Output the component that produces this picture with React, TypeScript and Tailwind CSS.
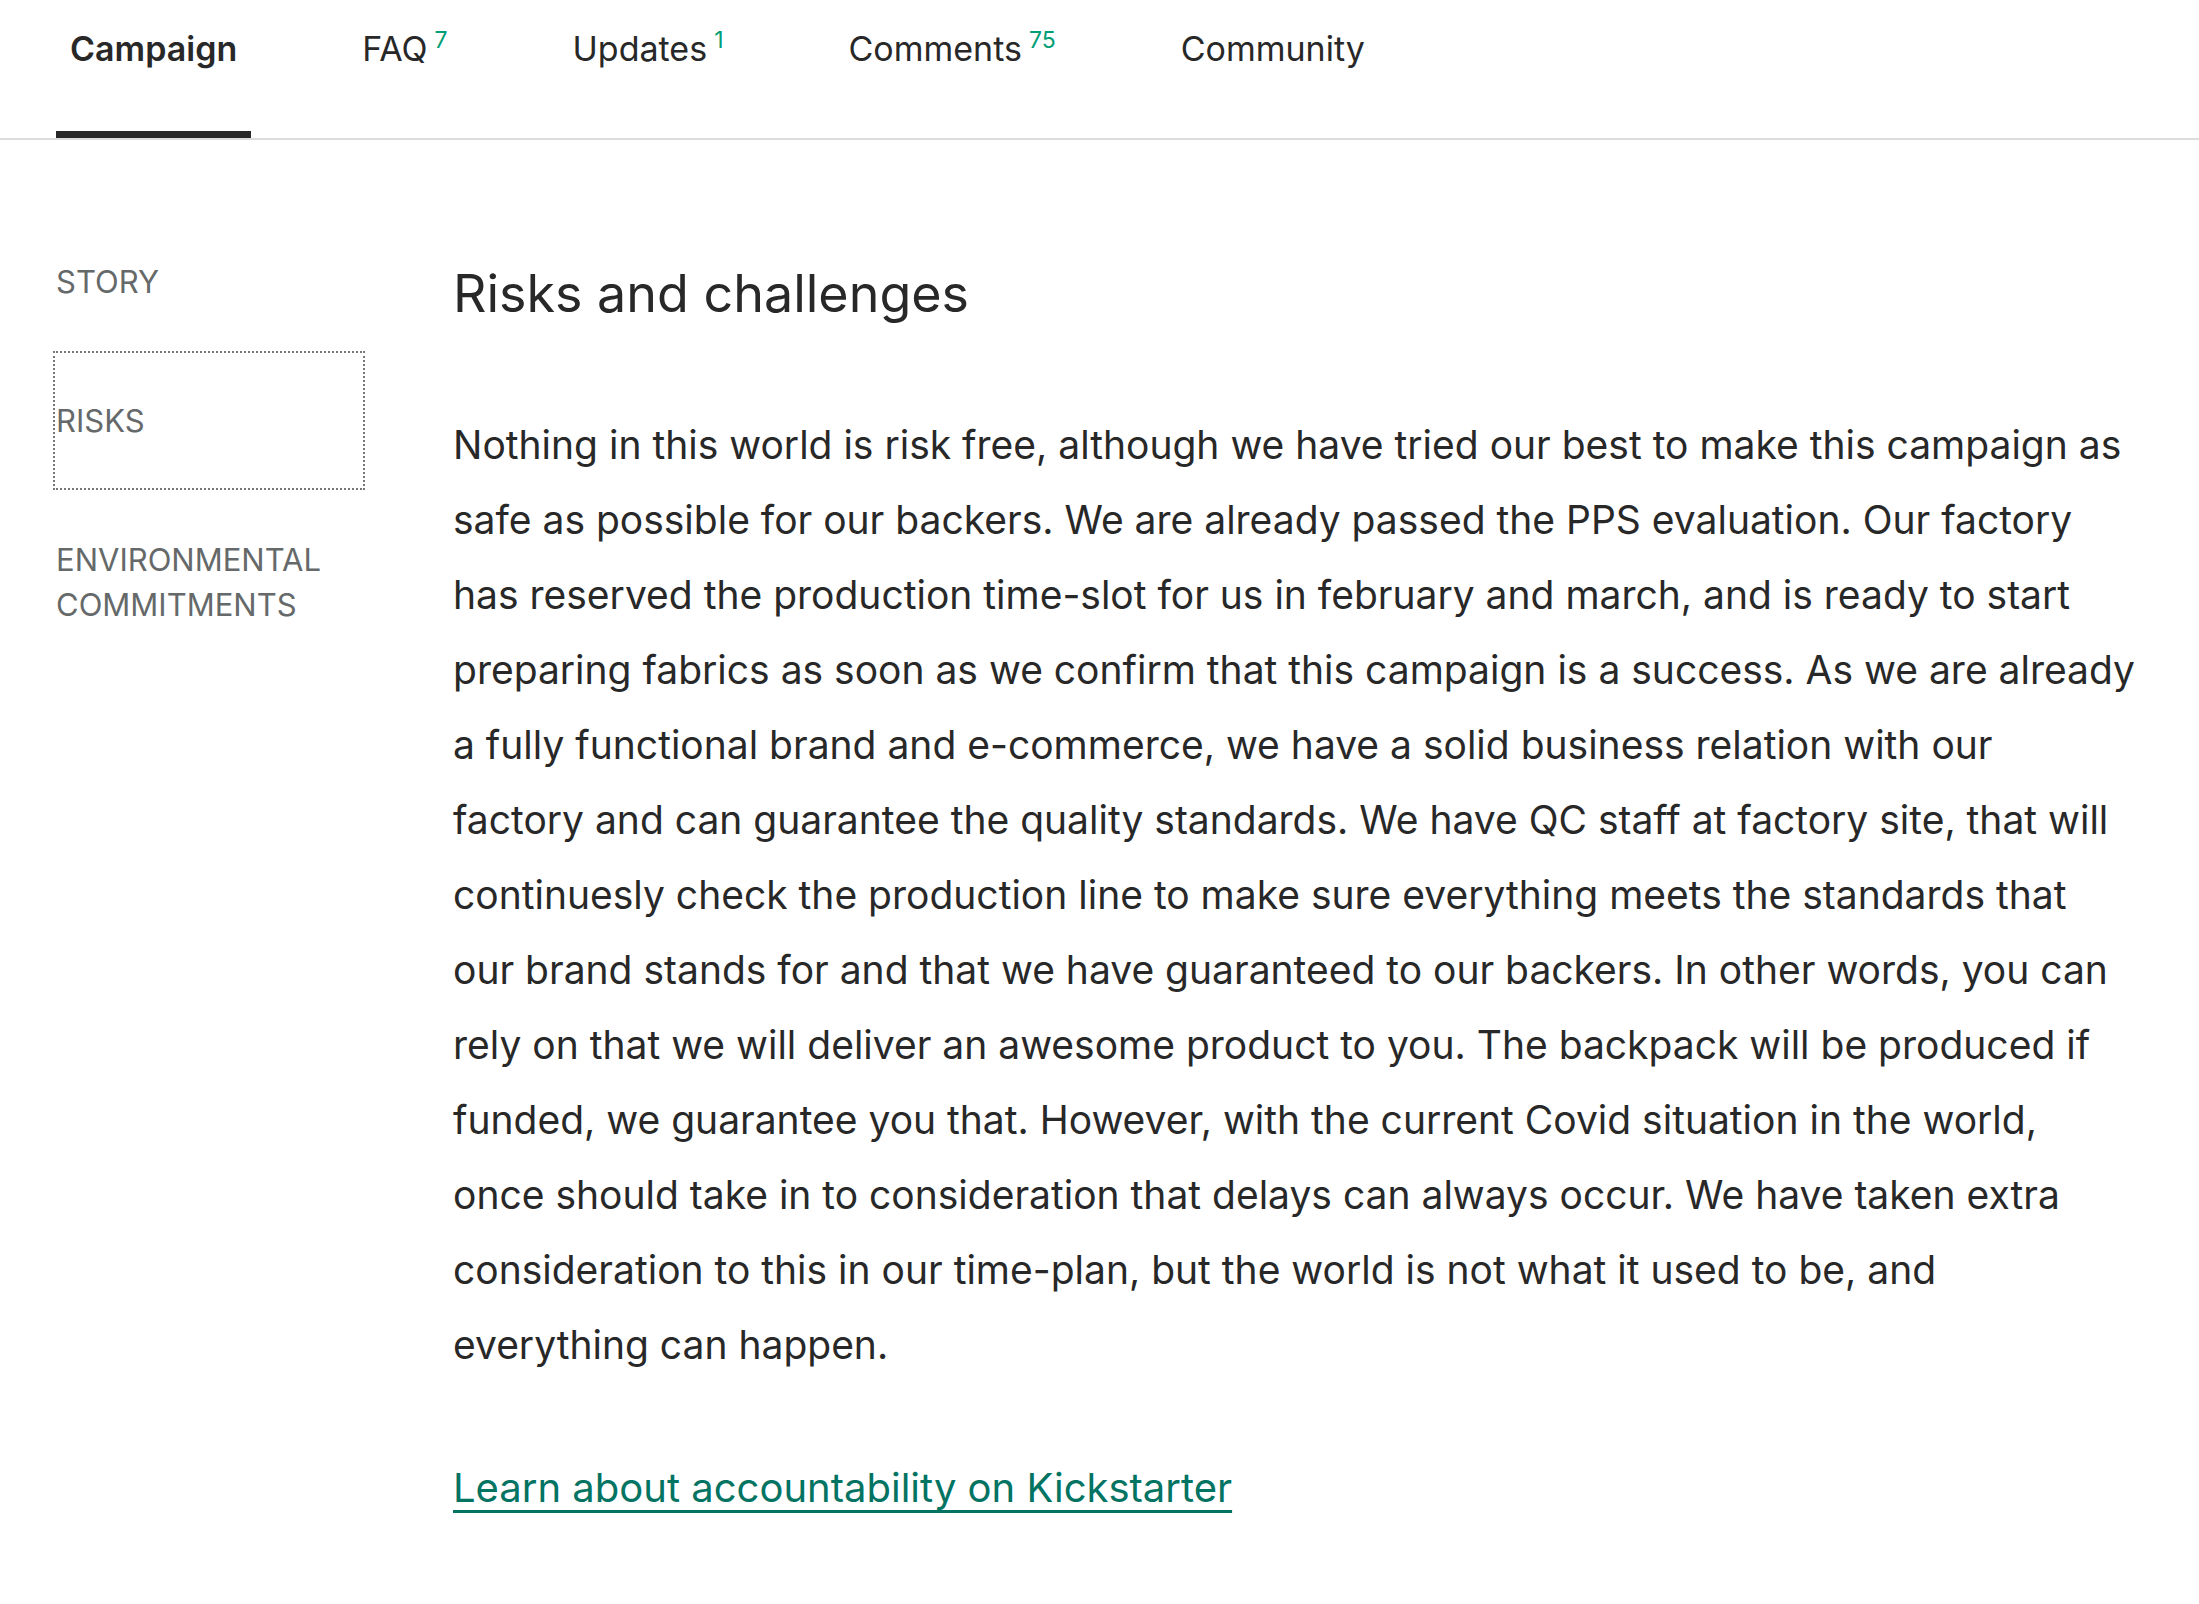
const tabs = [
  { label: "Campaign", count: "", active: true },
  { label: "FAQ", count: "7", active: false },
  { label: "Updates", count: "1", active: false },
  { label: "Comments", count: "75", active: false },
  { label: "Community", count: "", active: false },
];

const sections = [
  { label: ["STORY"], focused: false },
  { label: ["RISKS"], focused: true },
  { label: ["ENVIRONMENTAL", "COMMITMENTS"], focused: false },
];

const lines = [
  "Nothing in this world is risk free, although we have tried our best to make this campaign as",
  "safe as possible for our backers. We are already passed the PPS evaluation. Our factory",
  "has reserved the production time-slot for us in february and march, and is ready to start",
  "preparing fabrics as soon as we confirm that this campaign is a success. As we are already",
  "a fully functional brand and e-commerce, we have a solid business relation with our",
  "factory and can guarantee the quality standards. We have QC staff at factory site, that will",
  "continuesly check the production line to make sure everything meets the standards that",
  "our brand stands for and that we have guaranteed to our backers. In other words, you can",
  "rely on that we will deliver an awesome product to you. The backpack will be produced if",
  "funded, we guarantee you that. However, with the current Covid situation in the world,",
  "once should take in to consideration that delays can always occur. We have taken extra",
  "consideration to this in our time-plan, but the world is not what it used to be, and",
  "everything can happen.",
];

export default function App() {
  return (
    <div className="min-h-screen bg-white text-[#282828] font-['Inter',sans-serif]">
      <nav className="flex h-[140px] border-b-2 border-[#dcdcdc] pl-[56px] gap-[97px]">
        {tabs.map((tab) => (
          <div key={tab.label} className="flex flex-col justify-between">
            <div className="px-[14px] pt-[25px] flex items-start">
              <span
                className={`text-[34px] leading-[48px] ${tab.active ? "font-semibold" : "font-normal"}`}
              >
                {tab.label}
              </span>
              {tab.count && (
                <span className="ml-[7px] text-[23px] leading-[26px] text-[#009e74] mt-[2px]">
                  {tab.count}
                </span>
              )}
            </div>
            <div className={`h-[7px] ${tab.active ? "bg-[#282828]" : "bg-transparent"}`} />
          </div>
        ))}
      </nav>

      <div className="flex pt-[72px] pl-[53px]">
        <aside className="w-[312px] shrink-0">
          {sections.map((s) => (
            <div
              key={s.label[0]}
              className={`py-[45px] pl-[1px] border-2 ${
                s.focused ? "border-dotted border-[#777777]" : "border-transparent"
              }`}
            >
              {s.label.map((l) => (
                <div key={l} className="text-[31px] leading-[45px] text-[#656969]">
                  {l}
                </div>
              ))}
            </div>
          ))}
        </aside>

        <main className="ml-[88px] pt-[50px]">
          <h2 className="text-[52px] leading-[64px] font-normal">Risks and challenges</h2>
          <p className="mt-[81px] text-[39px] leading-[75px] whitespace-nowrap">
            {lines.map((l, i) => (
              <span key={i}>
                {l}
                {i < lines.length - 1 && <br />}
              </span>
            ))}
          </p>
          <a
            href="#"
            className="mt-[68px] block w-fit text-[40px] leading-[75px] text-[#037362] underline decoration-[3px] underline-offset-[8px]"
          >
            Learn about accountability on Kickstarter
          </a>
        </main>
      </div>
    </div>
  );
}
